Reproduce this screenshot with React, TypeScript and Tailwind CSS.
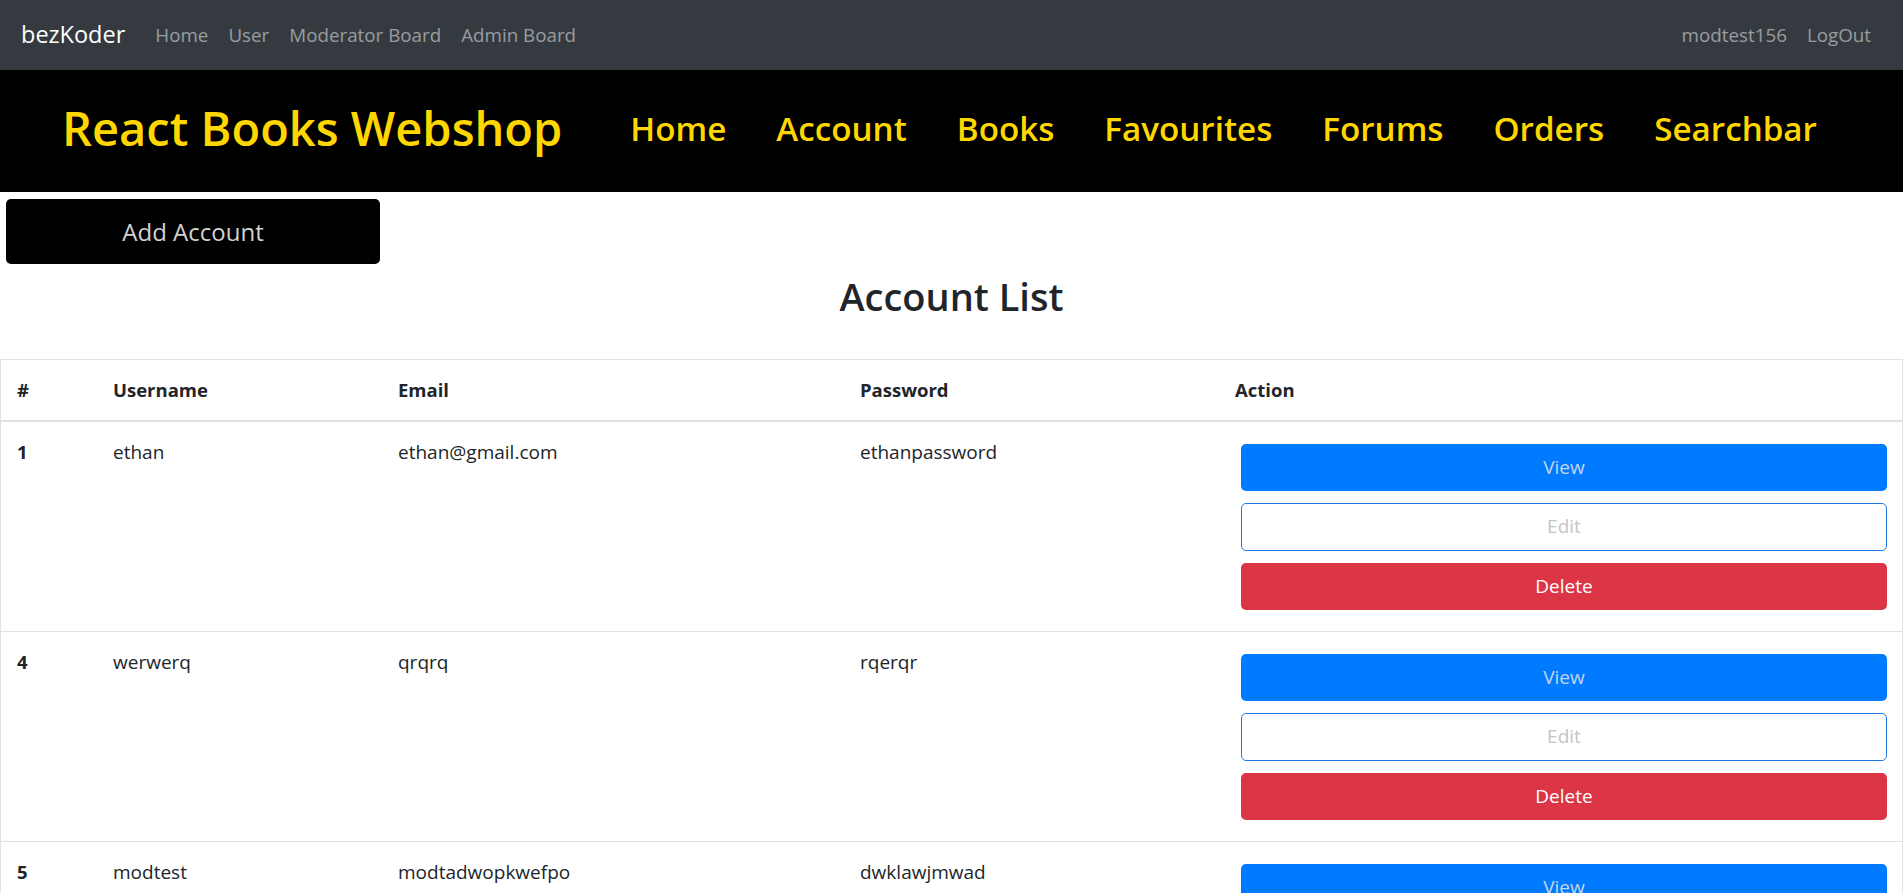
import React from "react";

const FONT = { fontFamily: '"Open Sans", "Noto Sans", "Liberation Sans", sans-serif' };

const rows = [
  { id: "1", username: "ethan", email: "ethan@gmail.com", password: "ethanpassword" },
  { id: "4", username: "werwerq", email: "qrqrq", password: "rqerqr" },
  { id: "5", username: "modtest", email: "modtadwopkwefpo", password: "dwklawjmwad" },
];

function ActionButtons() {
  return (
    <div className="flex flex-col gap-[12px] pt-[22px] pb-[21px] pl-[21px] pr-[15px]">
      <button className="h-[47px] w-full rounded-[5px] bg-[#007bff] text-[19px] text-[#c2d5ea]">View</button>
      <button className="h-[48px] w-full rounded-[5px] border border-[#1f7ae0] bg-white text-[19px] text-[#c4c4c4]">Edit</button>
      <button className="h-[47px] w-full rounded-[5px] bg-[#dc3545] text-[19px] text-white">Delete</button>
    </div>
  );
}

export default function App() {
  return (
    <div className="min-h-screen bg-white text-[#212529]" style={FONT}>
      {/* top bootstrap navbar */}
      <nav className="flex h-[70px] items-center justify-between bg-[#343a40] pl-[21px] pr-[22px]">
        <div className="flex items-center">
          <span className="mr-[20px] text-[23.5px] leading-none text-white">bezKoder</span>
          <div className="flex items-center text-[18.8px] text-white/50">
            <span className="px-[10px]">Home</span>
            <span className="px-[10px]">User</span>
            <span className="px-[10px]">Moderator Board</span>
            <span className="px-[10px]">Admin Board</span>
          </div>
        </div>
        <div className="flex items-center text-[18.8px] text-white/50">
          <span className="px-[10px]">modtest156</span>
          <span className="px-[10px]">LogOut</span>
        </div>
      </nav>

      {/* webshop header */}
      <header className="flex h-[122px] items-center whitespace-nowrap bg-black pb-[5px] pl-[62px]">
        <h1 className="text-[47px] font-semibold leading-none text-[#ffd700]">React Books Webshop</h1>
        <div className="ml-[68px] flex items-center gap-[50px] text-[33.2px] font-semibold text-[#ffd700]">
          <span>Home</span>
          <span>Account</span>
          <span>Books</span>
          <span>Favourites</span>
          <span>Forums</span>
          <span>Orders</span>
          <span>Searchbar</span>
        </div>
      </header>

      <div className="pl-[6px] pt-[7px]">
        <button className="h-[65px] w-[374px] rounded-[5px] bg-black text-[24px] text-[#d2d2d2]">Add Account</button>
      </div>

      <h2 className="mt-[10px] text-center text-[38px] font-semibold leading-[1.2] text-[#212529]">Account List</h2>

      <div className="mt-[39px] border border-[#dee2e6] text-[19px]">
        <div className="grid grid-cols-[97px_285px_462px_375px_1fr] border-b-2 border-[#dee2e6] text-[18.5px] font-bold">
          <div className="px-[16px] py-[15px] leading-[30px]">#</div>
          <div className="px-[15px] py-[15px] leading-[30px]">Username</div>
          <div className="px-[15px] py-[15px] leading-[30px]">Email</div>
          <div className="px-[15px] py-[15px] leading-[30px]">Password</div>
          <div className="px-[15px] py-[15px] leading-[30px]">Action</div>
        </div>
        {rows.map((r, i) => (
          <div
            key={r.id}
            className={`grid grid-cols-[97px_285px_462px_375px_1fr] ${i < rows.length - 1 ? "border-b border-[#dee2e6]" : ""}`}
          >
            <div className="px-[16px] py-[15px] text-[18.5px] font-bold leading-[30px]">{r.id}</div>
            <div className="px-[15px] py-[15px] leading-[30px]">{r.username}</div>
            <div className="px-[15px] py-[15px] leading-[30px]">{r.email}</div>
            <div className="px-[15px] py-[15px] leading-[30px]">{r.password}</div>
            <ActionButtons />
          </div>
        ))}
      </div>
    </div>
  );
}
